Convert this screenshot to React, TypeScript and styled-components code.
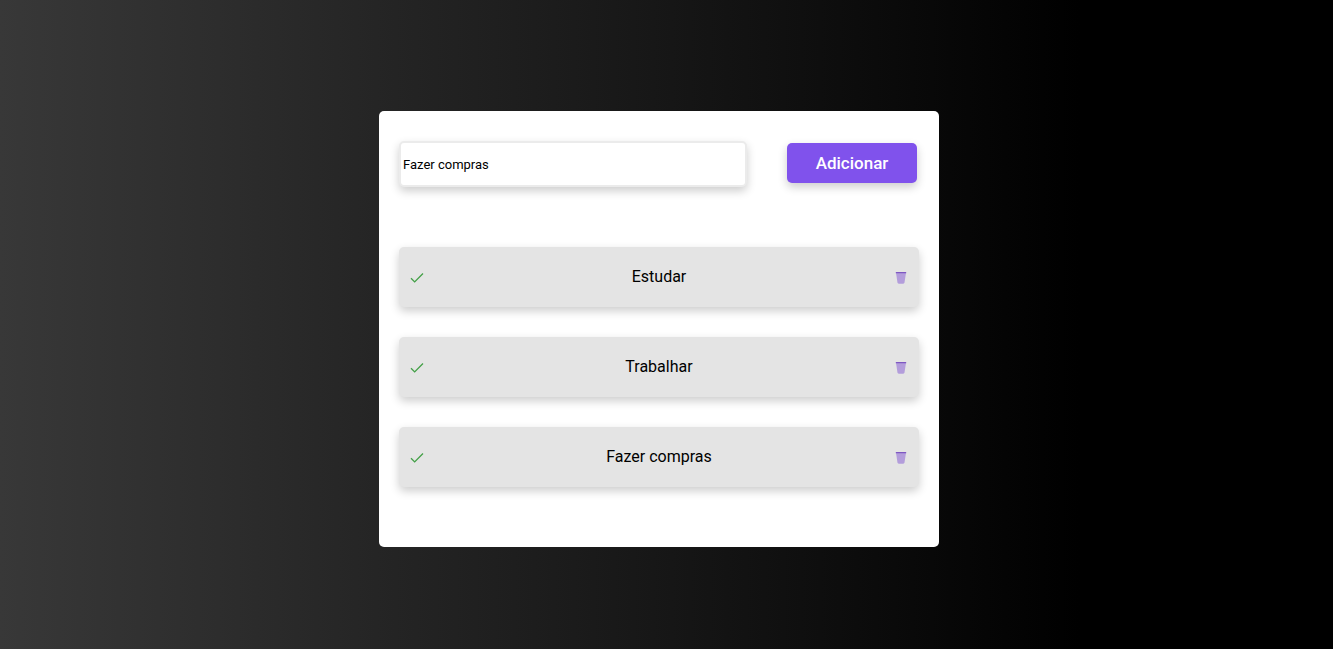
import { useState } from 'react';
import type { FormEvent } from 'react';
import styled, { createGlobalStyle } from 'styled-components';
import { FcCheckmark, FcEmptyTrash } from 'react-icons/fc';

const GlobalStyle = createGlobalStyle`
  * {
    margin: 0;
    padding: 0;
    box-sizing: border-box;
    font-family: Roboto, 'Liberation Sans', sans-serif;
  }
`;

const Page = styled.main`
  min-height: 100vh;
  padding: 9px 15px 0 0;
  display: flex;
  align-items: center;
  justify-content: center;
  background: linear-gradient(90deg, #383838 0%, #171717 49%, #000 81%);
`;

const Card = styled.section`
  width: 100%;
  max-width: 560px;
  padding: 30px 20px;
  border-radius: 5px;
  background: #fff;
`;

const TaskForm = styled.form`
  display: flex;
  align-items: center;
  gap: 40px;
  padding-right: 2px;
`;

const TaskInput = styled.input`
  flex: 1;
  min-width: 0;
  height: 46px;
  padding: 1px 2px;
  border: 2px solid #ebebeb;
  border-radius: 5px;
  outline: none;
  background: #fff;
  box-shadow: 0 4px 10px rgba(0, 0, 0, 0.2);
  color: #000;
  font-size: 13px;
`;

const AddButton = styled.button`
  width: 130px;
  height: 40px;
  margin-bottom: 2px;
  border: none;
  border-radius: 5px;
  background: #8052ec;
  box-shadow: 0 4px 10px rgba(0, 0, 0, 0.2);
  color: #fff;
  font-size: 17px;
  font-weight: 500;
  cursor: pointer;
`;

const TaskList = styled.ul`
  display: flex;
  flex-direction: column;
  gap: 30px;
  margin: 60px 0 30px;
  list-style: none;
`;

const TaskItem = styled.li`
  display: flex;
  align-items: center;
  justify-content: space-between;
  height: 60px;
  padding: 0 10px;
  border-radius: 5px;
  background: #e4e4e4;
  box-shadow: 0 4px 10px rgba(0, 0, 0, 0.2);
`;

const TaskName = styled.span`
  color: #000;
  font-size: 16px;
  line-height: 20px;
`;

const IconButton = styled.button`
  display: flex;
  border: none;
  background: none;
  font-size: 16px;
  cursor: pointer;
`;

export default function App() {
  const [tasks, setTasks] = useState(['Estudar', 'Trabalhar', 'Fazer compras']);
  const [text, setText] = useState('Fazer compras');

  const addTask = (event: FormEvent) => {
    event.preventDefault();
    if (text.trim()) setTasks([...tasks, text]);
  };

  const removeTask = (index: number) => setTasks(tasks.filter((_, i) => i !== index));

  return (
    <>
      <GlobalStyle />
      <Page>
        <Card>
          <TaskForm onSubmit={addTask}>
            <TaskInput
              aria-label="Tarefa"
              value={text}
              onChange={(event) => setText(event.target.value)}
            />
            <AddButton type="submit">Adicionar</AddButton>
          </TaskForm>
          <TaskList>
            {tasks.map((task, index) => (
              <TaskItem key={index}>
                <IconButton type="button" aria-label={`Concluir ${task}`}>
                  <FcCheckmark />
                </IconButton>
                <TaskName>{task}</TaskName>
                <IconButton
                  type="button"
                  aria-label={`Remover ${task}`}
                  onClick={() => removeTask(index)}
                >
                  <FcEmptyTrash />
                </IconButton>
              </TaskItem>
            ))}
          </TaskList>
        </Card>
      </Page>
    </>
  );
}
